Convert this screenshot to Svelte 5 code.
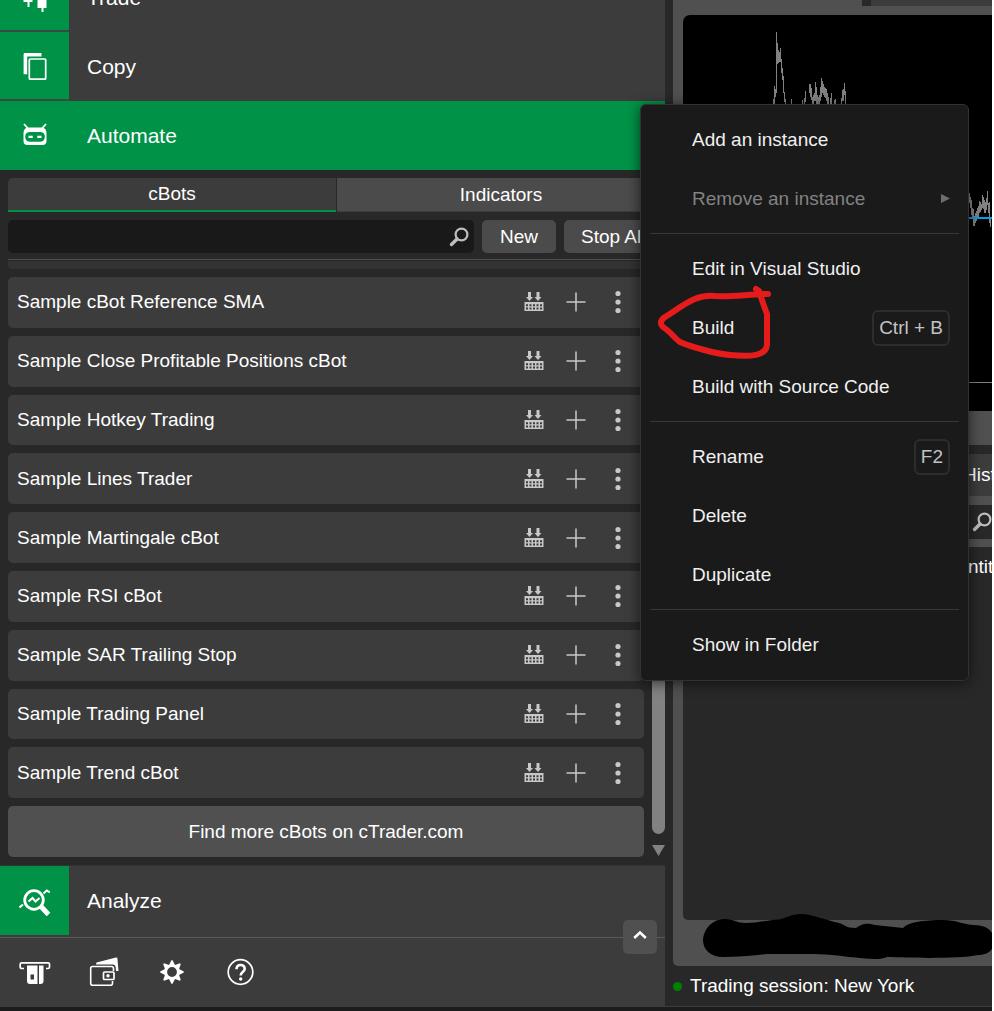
<script>
  const bots = [
    'Sample cBot Reference SMA',
    'Sample Close Profitable Positions cBot',
    'Sample Hotkey Trading',
    'Sample Lines Trader',
    'Sample Martingale cBot',
    'Sample RSI cBot',
    'Sample SAR Trailing Stop',
    'Sample Trading Panel',
    'Sample Trend cBot'
  ];

  const menu = [
    [{ label: 'Add an instance' }, { label: 'Remove an instance', disabled: true, submenu: true }],
    [{ label: 'Edit in Visual Studio' }, { label: 'Build', keys: 'Ctrl + B' }, { label: 'Build with Source Code' }],
    [{ label: 'Rename', keys: 'F2' }, { label: 'Delete' }, { label: 'Duplicate' }],
    [{ label: 'Show in Folder' }]
  ];

  // [x, high, low] per price bar
  const bars = [
    [90, 84, 92], [91, 71, 92], [92, 74, 82], [93, 17, 78], [94, 28, 49], [95, 35, 48], [96, 37, 47], [97, 33, 47],
    [98, 44, 58], [99, 53, 65], [100, 61, 78], [101, 77, 87], [102, 84, 92], [108, 84, 92], [119, 85, 92],
    [121, 83, 92], [122, 76, 87], [126, 69, 78], [127, 69, 82], [128, 73, 85], [129, 82, 92], [130, 80, 92],
    [131, 78, 86], [132, 67, 86], [133, 72, 92], [134, 80, 92], [135, 82, 92], [136, 80, 92], [137, 72, 86],
    [138, 63, 82], [139, 66, 78], [140, 69, 80], [141, 72, 82], [142, 73, 83], [143, 74, 86], [144, 78, 92],
    [145, 82, 92], [147, 83, 92], [148, 78, 92], [151, 85, 92], [152, 84, 92], [158, 83, 92], [159, 75, 86],
    [160, 74, 86], [161, 68, 80], [162, 76, 92],
    [286, 178, 188], [287, 182, 193], [288, 185, 200], [289, 193, 203], [290, 194, 211], [291, 201, 211],
    [292, 198, 208], [293, 196, 206], [294, 193, 202], [295, 191, 202], [296, 186, 198], [297, 187, 197],
    [298, 189, 195], [299, 180, 193], [300, 182, 194], [301, 185, 198], [302, 187, 198], [303, 183, 195],
    [304, 176, 190], [305, 188, 198], [306, 187, 208], [307, 202, 212]
  ];

  let tab = 'cBots';
  let query = '';
</script>

<div class="app">
  <div class="workspace">
    <aside class="sidebar">
      <nav>
        <a href="#trade" class="nav-row first">
          <span class="nav-icon">
            <svg width="32" height="32" viewBox="0 0 32 32" aria-hidden="true">
              <path d="M4.5 5h9v16h-3v5h-2v-5h-4zM18.5 8h9v19h-3v4h-2v-4h-4z" fill="#fff" />
            </svg>
          </span>
          <span class="nav-label">Trade</span>
        </a>
        <a href="#copy" class="nav-row">
          <span class="nav-icon">
            <svg width="32" height="32" viewBox="0 0 32 32" aria-hidden="true">
              <path d="M6 3h16.5v3.6H8.2v17.6H4.6V4.4Q4.6 3 6 3z" fill="#fff" />
              <rect x="10.3" y="9" width="16.4" height="20.2" rx="1" fill="none" stroke="#fff" stroke-width="1.7" />
            </svg>
          </span>
          <span class="nav-label">Copy</span>
        </a>
        <a href="#automate" class="nav-row active" aria-current="page">
          <span class="nav-icon">
            <svg width="32" height="32" viewBox="0 0 32 32" aria-hidden="true">
              <path d="M5 5l4.5 5M27 5l-4.5 5" stroke="#fff" stroke-width="1.8" />
              <path fill-rule="evenodd" d="M9 8.5h14q4.500.5 4.500 6V22q0 4-4 4h-15q-4 0-4-4v-7.500q0-5.500 4.500-6zM10.500 13q-4.300.3-4.300 4.700t4.300 5h11q4.300-.7 4.300-5t-4.300-4.700z" fill="#fff" />
              <path d="M9.500 16.800h4.200v2.200H9.500zM18.300 16.800h4.200v2.200h-4.200z" fill="#fff" />
            </svg>
          </span>
          <span class="nav-label">Automate</span>
        </a>
      </nav>

      <section class="bots">
        <div class="tabs" role="tablist">
          {#each ['cBots', 'Indicators'] as name}
            <button type="button" role="tab" class="tab" class:selected={tab === name} aria-selected={tab === name} on:click={() => (tab = name)}>{name}</button>
          {/each}
        </div>

        <div class="toolbar">
          <label class="search">
            <input type="text" aria-label="Search cBots" bind:value={query} />
            <svg width="20" height="20" viewBox="0 0 20 20" aria-hidden="true">
              <circle cx="12.500" cy="7.500" r="5.900" fill="none" stroke="#bebebe" stroke-width="2.200" />
              <path d="M8 12l-5.500 5.500" stroke="#bebebe" stroke-width="3.400" stroke-linecap="round" />
            </svg>
          </label>
          <button type="button" class="tool">New</button>
          <button type="button" class="tool stop">Stop All</button>
        </div>

        <div class="scroller">
          <div class="list">
            <div class="peek"></div>
            {#each bots as bot}
              <div class="card">
                <span class="card-name">{bot}</span>
                <button type="button" class="icon-btn" aria-label="Build">
                  <svg width="20" height="20" viewBox="0 0 20 20" aria-hidden="true">
                    <path d="M4 0h3v5h2l-3.500 4L2 5h2zM12.500 0h3v5h2L14 9l-3.500-4h2z" fill="#c8c8c8" />
                    <path d="M.5 10h19v9H.5z" fill="#c8c8c8" />
                    <path d="M2 13.200h16M2 16.500h16" stroke="#3c3c3c" stroke-width="2" stroke-dasharray="2 1.500" />
                  </svg>
                </button>
                <button type="button" class="icon-btn" aria-label="Add instance">
                  <svg width="20" height="20" viewBox="0 0 20 20" aria-hidden="true">
                    <path d="M.5 10h19M10 .5v19" stroke="#c8c8c8" stroke-width="1.500" />
                  </svg>
                </button>
                <button type="button" class="icon-btn" aria-label="More">
                  <svg width="20" height="24" viewBox="0 0 20 24" fill="#c8c8c8" aria-hidden="true">
                    <circle cx="10" cy="3.500" r="2.600" />
                    <circle cx="10" cy="12" r="2.600" />
                    <circle cx="10" cy="20.500" r="2.600" />
                  </svg>
                </button>
              </div>
            {/each}
            <a href="#store" class="find-more">Find more cBots on cTrader.com</a>
          </div>
          <div class="scrollbar" aria-hidden="true">
            <div class="thumb"></div>
            <svg width="13" height="12" viewBox="0 0 13 12"><path d="M0 1h13L6.500 12z" fill="#828282" /></svg>
          </div>
        </div>
      </section>

      <a href="#analyze" class="nav-row analyze">
        <span class="nav-icon">
          <svg width="32" height="32" viewBox="0 0 32 32" fill="none" stroke="#fff" aria-hidden="true">
            <circle cx="15" cy="15" r="9.300" stroke-width="2.800" />
            <path d="M22 21.500l7.500 8" stroke-width="5" />
            <path d="M9.500 16.500l4-3.500 3 3.500 4-3.500M.5 22.500l3.500-3M24.500 8.500l3.300-3 3 1.800" stroke-width="2" />
          </svg>
        </span>
        <span class="nav-label">Analyze</span>
      </a>

      <footer class="footer">
        <button type="button" class="foot-btn" aria-label="Deposit">
          <svg width="32" height="32" viewBox="0 0 32 32" aria-hidden="true">
            <path d="M5 12.500H3q-1.800 0-1.800-1.500V8Q1.200 6.800 3 6.800h26q1.500 0 1.500 1.200v3q0 1.500-1.500 1.500h-2" fill="none" stroke="#fff" stroke-width="1.700" />
            <path fill-rule="evenodd" d="M8 9.500h10.500v18.500H11q-3 0-3-3zM11.500 18.500v5h3.500v-5z" fill="#fff" />
            <path d="M20 9.500h4.500V25q0 3-3 3H20z" fill="#fff" />
          </svg>
        </button>
        <button type="button" class="foot-btn" aria-label="Wallet">
          <svg width="32" height="32" viewBox="0 0 32 32" aria-hidden="true">
            <path d="M8.500 6.500L28 1.500q1.200-.3 1.400.8L30.500 15h-2.500l-.3-3.500q-.3-3-3-3H8z" fill="#fff" />
            <path d="M25.500 15v-2.500q0-2-2-2H4.500q-1.800 0-1.800 1.800v15q0 2 1.800 2h18q2 0 2-2V25" fill="none" stroke="#fff" stroke-width="1.600" />
            <rect x="15.500" y="16" width="10.500" height="7.500" rx="1" fill="none" stroke="#fff" stroke-width="1.700" />
            <circle cx="20" cy="19.800" r="1.700" fill="#fff" />
          </svg>
        </button>
        <button type="button" class="foot-btn" aria-label="Settings">
          <svg width="32" height="32" viewBox="0 0 32 32" aria-hidden="true">
            <g transform="translate(15 16)">
              <circle r="6.300" fill="none" stroke="#fff" stroke-width="2.800" />
              {#each [0, 45, 90, 135, 180, 225, 270, 315] as angle}
                <path d="M-3.200-6.500L-.6-11.800h1.200L3.200-6.500z" fill="#fff" transform="rotate({angle})" />
              {/each}
            </g>
          </svg>
        </button>
        <button type="button" class="foot-btn" aria-label="Help">
          <svg width="32" height="32" viewBox="0 0 32 32" fill="none" stroke="#fff" aria-hidden="true">
            <circle cx="14.500" cy="16" r="12.300" stroke-width="1.700" />
            <path d="M10.500 13.200q0-4.200 4-4.200t4.200 3.700q0 1.800-2 3.300-2 1.500-2 3.500" stroke-width="2.600" />
            <circle cx="14.700" cy="23" r="1.700" fill="#fff" stroke="none" />
          </svg>
        </button>
        <button type="button" class="collapse" aria-label="Collapse panel">
          <svg width="14" height="10" viewBox="0 0 14 10" aria-hidden="true">
            <path d="M1.200 8L7 2.500 12.800 8" fill="none" stroke="#fff" stroke-width="2.600" />
          </svg>
        </button>
      </footer>
    </aside>

    <main class="main">
      <div class="panel">
        <div class="chart-tabs"><span class="chart-tab"></span></div>
        <div class="chart">
          <svg width="100%" height="100%" aria-hidden="true">
            {#each bars as [x, high, low]}
              <rect {x} y={high} width="1" height={low - high} fill="#828282" />
            {/each}
            <rect y="202" width="100%" height="2" fill="#00a2e8" />
            <rect y="367" width="100%" height="1" fill="#828282" />
          </svg>
        </div>
        <div class="table-tabs"><span>History</span></div>
        <div class="table-search">
          <svg width="20" height="20" viewBox="0 0 20 20" aria-hidden="true">
            <circle cx="12.500" cy="7.500" r="5.900" fill="none" stroke="#bebebe" stroke-width="2.200" />
            <path d="M8 12l-5.500 5.500" stroke="#bebebe" stroke-width="3.400" stroke-linecap="round" />
          </svg>
        </div>
        <div class="table-body"><span>Quantity</span></div>
        <div class="account">
          <svg class="scrawl" width="292" height="48" viewBox="0 0 292 48" aria-hidden="true">
            <path d="M0 26C1 14 10 5 22 5C30 5 34 9 43 9C55 9 66 6 76 5.500C84 4 88 0 98 0C108 0 122 6 136 9C143 11 142 14 153 14C160 9 164 9 172 11L200 14C205 8 222 6 240 6C254 6 258 10 270 11C284 11 291 17 291 27C291 36 285 41 275 41C255 45 210 44 184 43C176 47 160 44 146 43C124 39 100 40 64 40C48 42 34 43 20 43C8 43 0 36 0 26Z" />
          </svg>
        </div>
      </div>
      <div class="status"><span class="dot"></span>Trading session: New York</div>
    </main>
  </div>
  <div class="bottom-edge"></div>

  <div class="menu" role="menu">
    {#each menu as group}
      <div class="group">
        {#each group as item}
          <button type="button" role="menuitem" class="item" disabled={item.disabled}>
            <span>{item.label}</span>
            {#if item.keys}<kbd>{item.keys}</kbd>{/if}
            {#if item.submenu}
              <svg width="9" height="9" viewBox="0 0 9 9" aria-hidden="true"><path d="M0 0l9 4.500L0 9z" fill="#6e6e6e" /></svg>
            {/if}
          </button>
        {/each}
      </div>
    {/each}
    <svg class="ring" width="116" height="76" viewBox="0 0 116 76" aria-hidden="true">
      <path d="M111 9C92 9 76 12 58 11C38 9 26 21 8 32Q1 37 6 42C13 46 17 53 23 57C34 62 60 69 73 70C94 72 109 71 110 60L110 29C106 19 104 12 102 6L99 4" />
    </svg>
  </div>
</div>

<style>
  :global(body) {
    margin: 0;
    background: #fff;
  }
  .app {
    position: relative;
    display: flex;
    flex-direction: column;
    min-height: 100vh;
    margin-right: 2px;
    overflow: hidden;
    background: #282828;
    color: #fff;
    font-family: "Liberation Sans", Arial, sans-serif;
    font-size: 19px;
    line-height: 24px;
  }
  button, input {
    font: inherit;
    color: inherit;
    border: 0;
    padding: 0;
    margin: 0;
    background: none;
  }
  button { cursor: pointer; }
  a { color: inherit; text-decoration: none; }
  svg { display: block; flex: none; }

  .workspace {
    flex: 1;
    display: grid;
    grid-template-columns: minmax(0, 665fr) minmax(0, 319fr);
    gap: 8px;
  }

  /* sidebar */
  .sidebar {
    display: flex;
    flex-direction: column;
  }
  nav { overflow: hidden; }
  .nav-row {
    box-sizing: border-box;
    display: flex;
    align-items: center;
    height: 69px;
    background: #3c3c3c;
    font-size: 21px;
  }
  .nav-row.first { margin-top: -37px; }
  .nav-row.active { background: #009347; }
  .nav-icon {
    box-sizing: border-box;
    width: 69px;
    height: 69px;
    display: grid;
    place-items: center;
    background: #009347;
    border-bottom: 2px solid #3a4a40;
  }
  .active .nav-icon { border-color: transparent; background: none; }
  .nav-label { padding-left: 18px; }
  .nav-row.analyze {
    height: 73px;
    padding-bottom: 2px;
    border-top: 1px solid #343434;
    border-bottom: 1px solid #5a5a5a;
  }
  .analyze .nav-icon { border-bottom: 0; }

  .bots {
    flex: 1;
    display: flex;
    flex-direction: column;
    padding: 8px 0 0 8px;
  }
  .tabs {
    display: grid;
    grid-template-columns: 1fr 1fr;
    gap: 1px;
    margin-bottom: 8px;
  }
  .tab {
    box-sizing: border-box;
    height: 34px;
    background: #4b4b4b;
    border-bottom: 1px solid #3c3c3c;
  }
  .tab:first-child { border-top-left-radius: 5px; }
  .tab.selected {
    background: #3c3c3c;
    border-bottom: 2px solid #009347;
  }
  .toolbar {
    display: flex;
    gap: 8px;
    height: 33px;
    margin-bottom: 6px;
  }
  .search {
    flex: 1;
    min-width: 0;
    display: flex;
    align-items: center;
    padding-right: 5px;
    border-radius: 5px;
    background: #191919;
  }
  .search input {
    flex: 1;
    min-width: 0;
    padding: 0 8px;
    outline: none;
  }
  .tool {
    flex: none;
    width: 74px;
    border-radius: 5px;
    background: #4b4b4b;
    white-space: nowrap;
  }
  .tool.stop {
    width: 101px;
    padding-left: 17px;
    text-align: left;
  }
  .scroller {
    flex: 1;
    display: flex;
    gap: 8px;
    border-top: 1px solid #505050;
  }
  .list {
    flex: 1;
    min-width: 0;
    display: flex;
    flex-direction: column;
    gap: 8px;
    padding: 1px 0 8px;
  }
  .peek {
    height: 8px;
    border-radius: 0 0 4px 4px;
    background: #333;
  }
  .card {
    flex: 1 1 50px;
    display: flex;
    align-items: center;
    padding: 0 5px 0 9px;
    border-radius: 5px;
    background: #3c3c3c;
  }
  .card-name { flex: 1; }
  .icon-btn {
    width: 42px;
    height: 42px;
    display: grid;
    place-items: center;
  }
  .find-more {
    flex: 1 1 50px;
    display: flex;
    align-items: center;
    justify-content: center;
    border-radius: 5px;
    background: #505050;
  }
  .scrollbar {
    width: 13px;
    display: flex;
    flex-direction: column;
    gap: 10px;
    padding: 240px 0 9px;
  }
  .thumb {
    flex: 1;
    border-radius: 7px;
    background: #828282;
  }

  .footer {
    position: relative;
    display: flex;
    height: 68px;
    background: #3c3c3c;
  }
  .foot-btn {
    width: 69px;
    display: grid;
    place-items: center;
  }
  .collapse {
    position: absolute;
    top: -18px;
    right: 8px;
    width: 34px;
    height: 34px;
    display: grid;
    place-items: center;
    padding-bottom: 4px;
    border-radius: 5px;
    background: #505050;
  }

  /* chart and positions table */
  .main {
    display: flex;
    flex-direction: column;
  }
  .panel {
    flex: 1;
    display: flex;
    flex-direction: column;
    padding-left: 10px;
    border-radius: 0 0 0 5px;
    background: #505050;
  }
  .chart-tabs {
    display: flex;
    justify-content: flex-end;
    height: 6px;
    margin-bottom: 9px;
  }
  .chart-tab {
    width: 121px;
    border-left: 9px solid #282828;
    background: #3c3c3c;
  }
  .chart {
    height: 396px;
    margin-bottom: 34px;
    border-radius: 7px 0 0 0;
    background: #000;
    overflow: hidden;
  }
  .table-tabs {
    height: 42px;
    margin-bottom: 9px;
    border-top: 9px solid #282828;
    background: #3c3c3c;
    line-height: 42px;
    padding-left: 280px;
    overflow: hidden;
  }
  .table-search {
    display: flex;
    align-items: center;
    justify-content: flex-end;
    height: 34px;
    margin-bottom: 8px;
    background: #282828;
  }
  .table-body {
    flex: 1;
    padding: 8px 0 0 249px;
    border-radius: 0 0 0 5px;
    background: #282828;
    overflow: hidden;
  }
  .account {
    position: relative;
    height: 46px;
  }
  .scrawl {
    position: absolute;
    left: 20px;
    top: -6px;
  }
  .status {
    display: flex;
    align-items: center;
    gap: 8px;
    height: 40px;
    white-space: nowrap;
  }
  .dot {
    width: 9px;
    height: 9px;
    border-radius: 50%;
    background: #008000;
  }
  .bottom-edge {
    height: 4px;
    border-top: 1px solid #3c3c3c;
    background: #1c1c1c;
  }

  /* context menu */
  .menu {
    box-sizing: border-box;
    position: absolute;
    left: 640px;
    top: 104px;
    width: 329px;
    padding: 5px 9px 6px;
    border: 1px solid #323232;
    border-radius: 6px;
    background: #1a1a1a;
    box-shadow: 0 2px 14px rgba(0, 0, 0, 0.6);
    color: #f0f0f0;
  }
  .group + .group {
    margin-top: 5px;
    padding-top: 5px;
    border-top: 1px solid #373737;
  }
  .item {
    width: 100%;
    height: 59px;
    display: flex;
    align-items: center;
    justify-content: space-between;
    padding: 0 9px 0 42px;
    text-align: left;
  }
  .item:disabled { color: #828282; cursor: default; }
  kbd {
    box-sizing: border-box;
    height: 36px;
    padding: 0 5px;
    border: 2px solid #2d2d2d;
    border-radius: 6px;
    color: #c3c3c3;
    font: inherit;
    line-height: 32px;
  }
  .ring {
    position: absolute;
    left: 16px;
    top: 180px;
    pointer-events: none;
  }
  .ring path {
    fill: none;
    stroke: #e61c1c;
    stroke-width: 6;
    stroke-linecap: round;
    stroke-linejoin: round;
  }
</style>
